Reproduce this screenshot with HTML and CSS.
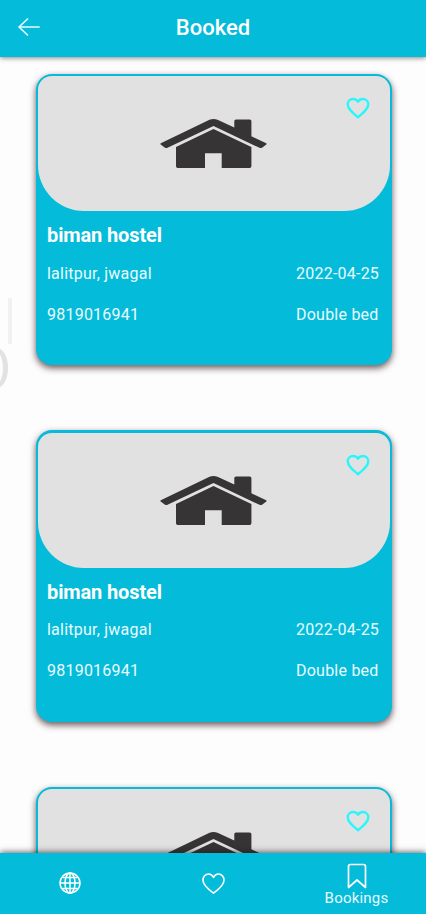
FILE: index.html
```html
<!DOCTYPE html>
<html lang="en">
<head>
<meta charset="utf-8">
<meta name="viewport" content="width=device-width, initial-scale=1">
<title>Booked</title>
<link rel="stylesheet" href="styles.css">
</head>
<body>
<svg class="defs" aria-hidden="true">
  <symbol id="house" viewBox="0 0 108 52">
    <path d="M.8 25.2 49.5 1.8Q53.5.1 57.5 1.8L74.3 9.5V3Q74.3 1.4 76 1.4H89.7Q91.4 1.4 91.4 3V18.2L106.2 25.2Q107 26 106 26.7L102 29.7Q100.7 30.4 99.5 29.8L53.5 7.9 7.5 29.8Q6.3 30.4 5 29.7L1 26.7Q0 26 .8 25.2Z"/>
    <path d="M16 28.9 53.5 11 91.4 28.9V48.3Q91.4 50 89.7 50H61.7V35.3H45V50H17.7Q16 50 16 48.3Z"/>
  </symbol>
  <symbol id="heart" viewBox="0 0 24 22">
    <path d="M12 20.3C6.500 15.800 1.700 11.800 1.700 7.200A5.300 5.300 0 0 1 7 2C9 2 10.900 3 12 4.700 13.100 3 15 2 17 2A5.300 5.300 0 0 1 22.300 7.200C22.300 11.800 17.500 15.800 12 20.300Z"/>
  </symbol>
</svg>
<div class="screen">
  <header class="topbar">
    <svg class="back" viewBox="0 0 22 18"><path d="M21 9H1M9.5 1 1 9l8.500 8"/></svg>
    <h1 class="title">Booked</h1>
  </header>
  <main class="list">
    <article class="card">
      <div class="photo"><svg class="house"><use href="#house"/></svg><svg class="fav"><use href="#heart"/></svg></div>
      <div class="info">
        <h2 class="name">biman hostel</h2>
        <div class="row"><span class="place">lalitpur, jwagal</span><span class="side">2022-04-25</span></div>
        <div class="row"><span class="phone">9819016941</span><span class="side">Double bed</span></div>
      </div>
    </article>
    <article class="card">
      <div class="photo"><svg class="house"><use href="#house"/></svg><svg class="fav"><use href="#heart"/></svg></div>
      <div class="info">
        <h2 class="name">biman hostel</h2>
        <div class="row"><span class="place">lalitpur, jwagal</span><span class="side">2022-04-25</span></div>
        <div class="row"><span class="phone">9819016941</span><span class="side">Double bed</span></div>
      </div>
    </article>
    <article class="card">
      <div class="photo"><svg class="house"><use href="#house"/></svg><svg class="fav"><use href="#heart"/></svg></div>
    </article>
  </main>
  <nav class="tabs">
    <div class="tab">
      <svg class="globe" viewBox="0 0 22 22"><circle cx="11" cy="11" r="10"/><ellipse cx="11" cy="11" rx="5" ry="10"/><path d="M11 1v20M1 11h20M3.500 5.500H18.500M3.500 16.500H18.500"/></svg>
    </div>
    <div class="tab"><svg class="saved" viewBox="0 0 24 22"><path d="M12 21C6.500 17 1 12.500 1 7.500 1 3.800 3.600 1 6.700 1 9 1 11 2.300 12 4.500 13 2.300 15 1 17.300 1 20.400 1 23 3.800 23 7.500 23 12.500 17.500 17 12 21Z"/></svg></div>
    <div class="tab">
      <svg class="mark" viewBox="0 0 20 26"><path d="M1.500 24.500V3.500Q1.500 1.500 3.500 1.500H16.500Q18.500 1.500 18.500 3.500V24.500L10 17Z"/></svg>
      <span class="tab-label">Bookings</span>
    </div>
  </nav>
  <div class="edge-handle"></div>
  <div class="edge-arc"></div>
</div>
</body>
</html>
```
FILE: styles.css
```css
* { box-sizing: border-box; }
body { margin: 0; background: #fefdfe; font-family: Roboto, sans-serif; color: #fff; }
.defs { position: absolute; width: 0; height: 0; }
.screen { position: relative; height: 914px; display: flex; flex-direction: column; overflow: hidden; }

.topbar {
  position: relative; z-index: 2; flex: none; height: 57px; padding: 0 18px;
  display: grid; grid-template-columns: 22px 1fr 22px; align-items: center;
  background: #04bbda; box-shadow: 0 1px 5px rgba(50, 25, 25, .55);
}
.back { width: 22px; height: 18px; margin-top: -4px; fill: none; stroke: #e6fbff; stroke-width: 1.7; stroke-linecap: round; stroke-linejoin: round; }
.title { margin: -1px 0 0; text-align: center; font-size: 22px; line-height: 26px; font-weight: 500; }

.list { flex: 1; min-height: 0; overflow: hidden; padding: 16.5px 34.5px 0 35.5px; }
.card {
  height: 291.5px; margin-bottom: 65px; padding: 2.5px 2px 0;
  border-radius: 16px; background: #04bbda;
  box-shadow: 0 3px 7px rgba(45, 20, 20, .72);
}
.photo {
  position: relative; height: 135px; display: flex; justify-content: center;
  background: #e2e1e2; border-radius: 14px 14px 46px 46px;
}
.house { width: 108px; height: 52px; margin-top: 42px; fill: #363435; }
.fav { position: absolute; right: 20px; top: 21px; width: 24px; height: 22px; fill: none; stroke: #2af6fa; stroke-width: 2.4; stroke-linejoin: round; }
.info { padding: 12px 10px 0 9.5px; }
.name { margin: 0; font-size: 20px; line-height: 24px; font-weight: 700; letter-spacing: -.12px; }
.row { display: flex; justify-content: space-between; font-size: 16px; line-height: 20px; margin-top: 21px; letter-spacing: .23px; color: #e9fbff; }
.name + .row { margin-top: 16.5px; }
.side { width: 83.5px; white-space: nowrap; }

.tabs {
  position: relative; z-index: 2; flex: none; height: 61px;
  display: grid; grid-template-columns: 142px 142px 1fr;
  background: #04bbda; box-shadow: 0 -1px 6px rgba(30, 20, 20, .65);
}
.tab { display: flex; flex-direction: column; align-items: center; padding-top: 10px; }
.tab svg { fill: none; stroke: #fff; stroke-width: 1.7; stroke-linejoin: round; }
.tab .globe { width: 22px; height: 22px; margin: 9px 3px 0 0; stroke-width: 1.5; }
.saved { width: 23px; height: 21px; margin-top: 10px; }
.mark { width: 20px; height: 26px; margin-left: 3px; }
.tab-label { font-size: 15px; line-height: 18px; margin: -.5px 0 0 3px; letter-spacing: .2px; color: #e9fbff; }

.edge-handle { position: absolute; left: 8px; top: 298px; width: 4px; height: 46px; background: #f2f0f2; }
.edge-arc { position: absolute; left: -14px; top: 348px; width: 22px; height: 40px; border: 5px solid #e4e1e4; border-radius: 50%; }
```
